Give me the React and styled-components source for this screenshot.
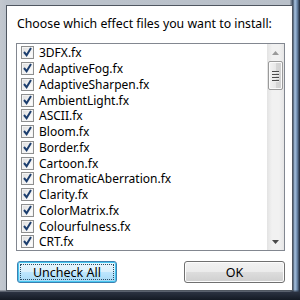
import React, { useState } from "react";
import styled, { createGlobalStyle } from "styled-components";

const GlobalStyle = createGlobalStyle`
  html, body {
    margin: 0;
    padding: 0;
    background: #fff;
  }
  #root {
    width: 300px;
    height: 300px;
  }
`;

const effects = [
  "3DFX.fx",
  "AdaptiveFog.fx",
  "AdaptiveSharpen.fx",
  "AmbientLight.fx",
  "ASCII.fx",
  "Bloom.fx",
  "Border.fx",
  "Cartoon.fx",
  "ChromaticAberration.fx",
  "Clarity.fx",
  "ColorMatrix.fx",
  "Colourfulness.fx",
  "CRT.fx",
];

const Frame = styled.div`
  box-sizing: border-box;
  width: 300px;
  height: 300px;
  padding: 5px 7px 9px 6px;
  background:
    linear-gradient(180deg, rgba(0, 0, 0, 0) 96.5%, #2a3140 97.5%, #141a24 100%),
    linear-gradient(90deg, #c3c8cf 0%, #bcc3cc 2%, #b9c0c9 96.5%, #3a4a5e 97.6%, #a9c3e0 98.3%, #6f8db0 99%, #1a2230 100%);
  display: flex;
`;

const Client = styled.div`
  flex: 1;
  display: flex;
  flex-direction: column;
  border: 1px solid #4f5660;
  background: #fff;
  padding: 10px 7px 7px 9px;
  font-family: "Noto Sans", "Open Sans", sans-serif;
  color: #000;
`;

const Prompt = styled.div`
  font-size: 12.3px;
  line-height: 16px;
  margin-left: 1px;
  white-space: nowrap;
`;

const ListBox = styled.div`
  margin-top: 11px;
  height: 208px;
  box-sizing: border-box;
  border: 1px solid #828790;
  display: flex;
  overflow: hidden;
`;

const Items = styled.div`
  flex: 1;
  padding: 1px 0 0 4px;
  overflow: hidden;
`;

const Row = styled.label`
  display: flex;
  align-items: center;
  height: 15.75px;
  gap: 5px;
  font-size: 12px;
  white-space: nowrap;
`;

const Box = styled.span`
  width: 11px;
  height: 11px;
  border: 1px solid #8e8f8f;
  background: linear-gradient(135deg, #dcdcdc 0%, #fbfbfb 80%);
  box-shadow: inset 0 0 0 1px #f4f4f4;
  position: relative;
  flex: none;

  svg {
    position: absolute;
    left: 1px;
    top: 0px;
  }
`;

const ScrollBar = styled.div`
  width: 17px;
  flex: none;
  background: linear-gradient(90deg, #e3e3e3, #f1f1f1 30%, #f1f1f1 70%, #e6e6e6);
  display: flex;
  flex-direction: column;
  align-items: center;
`;

const Arrow = styled.div`
  height: 17px;
  width: 17px;
  display: flex;
  align-items: center;
  justify-content: center;
`;

const Thumb = styled.div`
  box-sizing: border-box;
  width: 15px;
  height: 29px;
  border: 1px solid #9a9a9a;
  border-radius: 2px;
  background: linear-gradient(90deg, #f3f3f3 0%, #e8e8e8 50%, #d6d6d6 51%, #d0d0d0 100%);
  box-shadow: inset 0 0 0 1px #fbfbfb;
  display: flex;
  flex-direction: column;
  align-items: center;
  justify-content: center;
  gap: 2px;
`;

const Grip = styled.span`
  width: 7px;
  height: 1px;
  background: #4c4c4c;
  box-shadow: 0 1px 0 #eeeeee;
`;

const Track = styled.div`
  flex: 1;
`;

const Buttons = styled.div`
  margin-top: 10px;
  display: flex;
  justify-content: space-between;
  padding: 0 0 0 1px;
`;

const Button = styled.button`
  box-sizing: border-box;
  width: ${(p) => (p.$wide ? "100px" : "101px")};
  height: 22px;
  border-radius: 3px;
  font-family: "Noto Sans", "Open Sans", sans-serif;
  font-size: 12.5px;
  color: #000;
  padding: 0;
  position: relative;
  border: 1px solid ${(p) => (p.$focused ? "#3c7fb1" : "#707070")};
  background: ${(p) =>
    p.$focused
      ? "linear-gradient(180deg, #eaf6fd 0%, #d9f0fc 50%, #bee6fd 51%, #a7d9f5 100%)"
      : "linear-gradient(180deg, #f2f2f2 0%, #ebebeb 50%, #dddddd 51%, #cfcfcf 100%)"};
  box-shadow: inset 0 0 0 1px ${(p) => (p.$focused ? "#48c8f0" : "#fcfcfc")};

  &::after {
    content: "";
    display: ${(p) => (p.$focused ? "block" : "none")};
    position: absolute;
    inset: 2px;
    border: 1px dotted #2a4d64;
  }
`;

function Check() {
  return (
    <svg width="9" height="10" viewBox="0 0 9 10">
      <path d="M1 5 L3.6 8.2 L8 1" fill="none" stroke="#1c3e6e" strokeWidth="2" />
    </svg>
  );
}

export default function App() {
  const [checked, setChecked] = useState(effects.map(() => true));
  const toggle = (i) => setChecked(checked.map((c, j) => (j === i ? !c : c)));

  return (
    <>
      <GlobalStyle />
      <Frame>
        <Client>
          <Prompt>Choose which effect files you want to install:</Prompt>
          <ListBox>
            <Items>
              {effects.map((name, i) => (
                <Row key={name} onClick={() => toggle(i)}>
                  <Box>{checked[i] && <Check />}</Box>
                  {name}
                </Row>
              ))}
            </Items>
            <ScrollBar>
              <Arrow>
                <svg width="7" height="4" viewBox="0 0 7 4">
                  <path d="M0 4 L3.5 0 L7 4 Z" fill="#9a9a9a" />
                </svg>
              </Arrow>
              <Thumb>
                <Grip />
                <Grip />
                <Grip />
                <Grip />
              </Thumb>
              <Track />
              <Arrow>
                <svg width="7" height="4" viewBox="0 0 7 4">
                  <path d="M0 0 L7 0 L3.5 4 Z" fill="#4a4a4a" />
                </svg>
              </Arrow>
            </ScrollBar>
          </ListBox>
          <Buttons>
            <Button $focused $wide>Uncheck All</Button>
            <Button>OK</Button>
          </Buttons>
        </Client>
      </Frame>
    </>
  );
}
